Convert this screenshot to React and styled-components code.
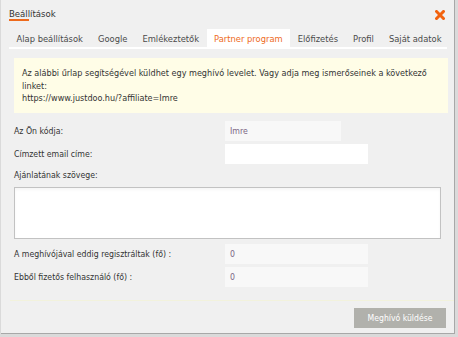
import React from "react";
import styled, { createGlobalStyle } from "styled-components";

const GlobalStyle = createGlobalStyle`
  html, body {
    margin: 0;
    padding: 0;
    background: #dadada;
  }
  body {
    font-family: "DejaVu Sans Condensed", "DejaVu Sans", sans-serif;
  }
`;

const tabs = [
  "Alap beállítások",
  "Google",
  "Emlékeztetők",
  "Partner program",
  "Előfizetés",
  "Profil",
  "Saját adatok",
];

const App = () => {
  return (
    <>
      <GlobalStyle />
      <Dialog>
        <Header>
          <Title>Beállítások</Title>
          <Close viewBox="0 0 10 10">
            <path d="M1.5 1.5 L8.5 8.5 M8.5 1.5 L1.5 8.5" />
          </Close>
        </Header>
        <TabBar>
          {tabs.map((t) => (
            <Tab key={t} active={t === "Partner program"}>
              {t}
            </Tab>
          ))}
        </TabBar>
        <Panel>
          <Info>
            Az alábbi űrlap segítségével küldhet egy meghívó levelet. Vagy adja
            meg ismerőseinek a következő linket:
            <br />
            https://www.justdoo.hu/?affiliate=Imre
          </Info>
          <Row top={8}>
            <Label>Az Ön kódja:</Label>
            <Field readOnly width={116}>Imre</Field>
          </Row>
          <Row top={3}>
            <Label>Címzett email címe:</Label>
            <Field width={143} />
          </Row>
          <Row top={1}>
            <Label>Ajánlatának szövege:</Label>
          </Row>
          <TextArea />
          <Row top={5}>
            <Label>A meghívójával eddig regisztráltak (fő) :</Label>
            <Field readOnly width={143}>0</Field>
          </Row>
          <Row top={3}>
            <Label>Ebből fizetős felhasználó (fő) :</Label>
            <Field readOnly width={143}>0</Field>
          </Row>
        </Panel>
        <Footer>
          <Button>Meghívó küldése</Button>
        </Footer>
      </Dialog>
    </>
  );
};

export default App;

const Dialog = styled.div`
  margin-left: 1px;
  width: 454px;
  height: 334px;
  box-sizing: border-box;
  background: #f0f0f0;
  border-right: 1px solid #a8a8a8;
  border-bottom: 1px solid #a8a8a8;
  display: flex;
  flex-direction: column;
`;

const Header = styled.div`
  display: flex;
  align-items: flex-start;
  justify-content: space-between;
  padding: 8px 8px 0 8px;
  height: 21px;
`;

const Title = styled.div`
  position: relative;
  font-size: 9.5px;
  line-height: 12px;
  color: #333;
  &::after {
    content: "";
    position: absolute;
    left: 0;
    top: 11px;
    width: 20px;
    height: 2px;
    background: #ee6a1c;
  }
`;

const Close = styled.svg`
  width: 10px;
  height: 10px;
  margin-top: 2px;
  margin-right: 1px;
  stroke: #f2620e;
  stroke-width: 3;
  stroke-linecap: square;
`;

const TabBar = styled.div`
  display: flex;
  margin: 0 7px 0 8px;
  border-bottom: 2px solid #ffffff;
`;

const Tab = styled.div`
  padding: 0 7.5px;
  height: 18px;
  line-height: 19px;
  font-size: 9.3px;
  color: ${({ active }) => (active ? "#ee6a1c" : "#4a4a4a")};
  background: ${({ active }) => (active ? "#ffffff" : "transparent")};
  white-space: nowrap;
`;

const Panel = styled.div`
  padding: 9px 6px 0 13px;
  display: flex;
  flex-direction: column;
`;

const Info = styled.div`
  background: #fffde7;
  padding: 9px 8px 8px 8px;
  font-size: 9px;
  line-height: 12.5px;
  color: #333;
`;

const Row = styled.div`
  display: flex;
  align-items: center;
  margin-top: ${({ top }) => top}px;
  height: 20px;
`;

const Label = styled.div`
  width: 211px;
  font-size: 8.7px;
  color: #333;
  white-space: nowrap;
`;

const Field = styled.div`
  box-sizing: border-box;
  width: ${({ width }) => width}px;
  height: 20px;
  padding-left: 5px;
  line-height: 21px;
  font-size: 8.7px;
  color: #7a6684;
  background: ${({ readOnly }) => (readOnly ? "#f8f8f8" : "#ffffff")};
`;

const TextArea = styled.div`
  box-sizing: border-box;
  margin-top: 2px;
  width: 427px;
  height: 52px;
  background: #ffffff;
  border: 1px solid #c2c2c2;
  box-shadow: inset 0 2px 3px rgba(0, 0, 0, 0.04);
`;

const Footer = styled.div`
  margin-top: 13px;
  margin-left: 9px;
  border-top: 1px solid #f2f2dc;
  display: flex;
  justify-content: flex-end;
  padding: 7px 8px 0 0;
`;

const Button = styled.div`
  width: 92px;
  height: 20px;
  line-height: 20px;
  text-align: center;
  background: #b1b1ac;
  color: #ffffff;
  font-size: 8.6px;
`;
